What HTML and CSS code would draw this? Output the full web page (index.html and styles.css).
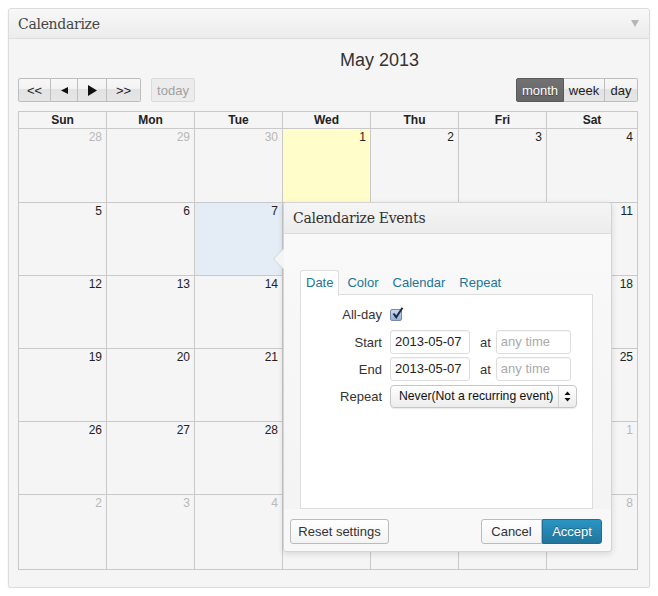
FILE: index.html
```html
<!DOCTYPE html>
<html>
<head>
<meta charset="utf-8">
<link rel="stylesheet" href="styles.css">
</head>
<body>
<div class="panel">
  <div class="panel-head">
    <span class="panel-title">Calendarize</span>
    <span class="collapse"></span>
  </div>
  <div class="panel-body">
    <div class="cal-title">May 2013</div>
    <div class="toolbar">
      <div class="btn-group">
        <button class="btn w33">&lt;&lt;</button>
        <button class="btn w27"><svg width="7" height="7" viewBox="0 0 7 7"><path d="M0 3.5 L7 0 L7 7 Z" fill="#111"/></svg></button>
        <button class="btn w29"><svg width="9" height="11" viewBox="0 0 9 11"><path d="M0 0 L9 5.5 L0 11 Z" fill="#111"/></svg></button>
        <button class="btn w34">&gt;&gt;</button>
      </div>
      <button class="btn today">today</button>
      <div class="spacer"></div>
      <div class="btn-group">
        <button class="btn active w48">month</button>
        <button class="btn w41">week</button>
        <button class="btn w33">day</button>
      </div>
    </div>
    <div class="grid">
      <div class="dh">Sun</div><div class="dh">Mon</div><div class="dh">Tue</div><div class="dh">Wed</div><div class="dh">Thu</div><div class="dh">Fri</div><div class="dh">Sat</div>

      <div class="d r1 other">28</div><div class="d r1 other">29</div><div class="d r1 other">30</div><div class="d r1 today-cell">1</div><div class="d r1">2</div><div class="d r1">3</div><div class="d r1">4</div>

      <div class="d">5</div><div class="d">6</div><div class="d sel">7</div><div class="d">8</div><div class="d">9</div><div class="d">10</div><div class="d">11</div>

      <div class="d">12</div><div class="d">13</div><div class="d">14</div><div class="d">15</div><div class="d">16</div><div class="d">17</div><div class="d">18</div>

      <div class="d">19</div><div class="d">20</div><div class="d">21</div><div class="d">22</div><div class="d">23</div><div class="d">24</div><div class="d">25</div>

      <div class="d">26</div><div class="d">27</div><div class="d">28</div><div class="d">29</div><div class="d">30</div><div class="d">31</div><div class="d other">1</div>

      <div class="d r6 other">2</div><div class="d r6 other">3</div><div class="d r6 other">4</div><div class="d r6 other">5</div><div class="d r6 other">6</div><div class="d r6 other">7</div><div class="d r6 other">8</div>
    </div>
  </div>

  <div class="popup">
    <span class="arrow"></span>
    <div class="popup-head">Calendarize Events</div>
    <div class="popup-body">
      <div class="tabs">
        <span class="tab active">Date</span>
        <span class="tab">Color</span>
        <span class="tab">Calendar</span>
        <span class="tab">Repeat</span>
      </div>
      <div class="tab-box">
        <div class="frow allday">
          <span class="lbl">All-day</span>
          <span class="check"><svg width="13" height="13" viewBox="0 0 13 13"><path d="M2.5 6.5 L5.2 10.2 L11.5 0.8" fill="none" stroke="#1c2a4a" stroke-width="2"/></svg></span>
        </div>
        <div class="frow first">
          <span class="lbl">Start</span>
          <span class="inp date">2013-05-07</span>
          <span class="at">at</span>
          <span class="inp time">any time</span>
        </div>
        <div class="frow">
          <span class="lbl">End</span>
          <span class="inp date">2013-05-07</span>
          <span class="at">at</span>
          <span class="inp time">any time</span>
        </div>
        <div class="frow">
          <span class="lbl">Repeat</span>
          <span class="select"><span class="sel-text">Never(Not a recurring event)</span><span class="sel-arrows"><svg width="7" height="11" viewBox="0 0 7 11"><path d="M0.5 4 L3.5 0.5 L6.5 4 Z M0.5 7 L3.5 10.5 L6.5 7 Z" fill="#111"/></svg></span></span>
        </div>
      </div>
    </div>
    <div class="popup-foot">
      <button class="pbtn reset">Reset settings</button>
      <div class="spacer"></div>
      <button class="pbtn cancel">Cancel</button>
      <button class="pbtn accept">Accept</button>
    </div>
  </div>
</div>
</body>
</html>
```
FILE: styles.css
```css
* { box-sizing: border-box; }
body {
  margin: 0;
  background: #ffffff;
  font-family: "Liberation Sans", Arial, sans-serif;
  color: #333;
}
.panel {
  position: relative;
  margin: 8px 0 0 8px;
  width: 642px;
  height: 580px;
  border: 1px solid #dcdcdc;
  border-radius: 3px;
  background: #f5f5f5;
  box-shadow: 0 1px 2px rgba(0,0,0,0.08);
}
.panel-head {
  height: 30px;
  display: flex;
  align-items: center;
  padding: 0 9px 0 9px;
  background: linear-gradient(#f8f8f8, #ececec);
  border-bottom: 1px solid #dfdfdf;
  border-radius: 3px 3px 0 0;
}
.panel-title {
  font-family: "DejaVu Serif", Georgia, serif;
  font-size: 14px;
  color: #464646;
  flex: 1;
  letter-spacing: -0.3px;
}
.collapse {
  width: 0; height: 0;
  border-left: 4px solid transparent;
  border-right: 4px solid transparent;
  border-top: 7px solid #b5b5b5;
  margin-right: 1px;
}
.panel-body {
  padding: 0 11px 0 9px;
}
.cal-title {
  margin-top: 10px;
  padding-left: 322px;
  font-size: 18px;
  line-height: 22px;
  color: #333;
}
.toolbar {
  margin-top: 7px;
  display: flex;
  align-items: center;
  height: 24px;
}
.spacer { flex: 1; }
.btn-group { display: flex; }
.btn {
  height: 24px;
  margin: 0;
  padding: 0;
  font-family: "Liberation Sans", Arial, sans-serif;
  font-size: 13px;
  color: #222;
  border: 1px solid #bdbdbd;
  border-left-width: 0;
  background: linear-gradient(#f7f7f7 0%, #f2f2f2 45%, #e2e2e2 46%, #e6e6e6 100%);
  display: flex;
  align-items: center;
  justify-content: center;
}
.btn-group .btn:first-child { border-left-width: 1px; border-radius: 2px 0 0 2px; }
.btn-group .btn:last-child { border-radius: 0 2px 2px 0; }
.w33 { width: 33px; }
.w27 { width: 27px; }
.w29 { width: 29px; }
.w34 { width: 34px; }
.w48 { width: 48px; }
.w41 { width: 41px; }
.btn.today {
  margin-left: 10px;
  width: 44px;
  border: 1px solid #dadada;
  border-radius: 2px;
  background: #ececec;
  color: #a0a0a0;
}
.btn.active {
  background: linear-gradient(#727272, #666);
  border-color: #5a5a5a;
  color: #fff;
  text-shadow: 0 1px 1px rgba(0,0,0,0.4);
}
.grid {
  margin-top: 9px;
  width: 620px;
  display: grid;
  grid-template-columns: repeat(6, 88px) 1fr;
  grid-template-rows: 17px 74px 73px 73px 73px 73px 75px;
  border-left: 1px solid #c9c9c9;
  border-top: 1px solid #c9c9c9;
}
.dh, .d {
  border-right: 1px solid #c9c9c9;
  border-bottom: 1px solid #c9c9c9;
  font-size: 12px;
}
.dh {
  font-weight: bold;
  text-align: center;
  line-height: 16px;
  color: #222;
}
.d {
  text-align: right;
  padding: 1px 4px 0 0;
  line-height: 14px;
  color: #222;
}
.d.other { color: #b8b8b8; }
.d.today-cell { background: #fffdc9; }
.d.sel { background: #e4ecf6; }

.popup {
  position: absolute;
  left: 274px;
  top: 193px;
  width: 329px;
  height: 350px;
  border: 1px solid #d4d4d4;
  border-radius: 3px;
  background: #f8f8f8;
  box-shadow: 0 2px 6px rgba(0,0,0,0.12);
}
.arrow {
  position: absolute;
  left: -11px;
  top: 45px;
  width: 0; height: 0;
  border-top: 11px solid transparent;
  border-bottom: 11px solid transparent;
  border-right: 11px solid #d4d4d4;
}
.arrow::after {
  content: "";
  position: absolute;
  left: 1px;
  top: -10px;
  border-top: 10px solid transparent;
  border-bottom: 10px solid transparent;
  border-right: 10px solid #f5f5f5;
}
.popup-head {
  height: 31px;
  padding-left: 9px;
  display: flex;
  align-items: center;
  font-family: "DejaVu Serif", Georgia, serif;
  font-size: 14px;
  letter-spacing: -0.3px;
  color: #333;
  background: linear-gradient(#f5f5f5, #ececec);
  border-bottom: 1px solid #dcdcdc;
  border-radius: 3px 3px 0 0;
}
.popup-body {
  padding: 36px 18px 0 16px;
  background: linear-gradient(#f9f9f9, #f4f4f4);
}
.tabs {
  display: flex;
  height: 25px;
  position: relative;
  z-index: 1;
}
.tab {
  padding: 0 6px;
  border: 1px solid transparent;
  border-bottom: 0;
  font-size: 13px;
  line-height: 24px;
  color: #21759b;
}
.tab.active {
  padding: 0 5px;
  margin-right: 1px;
  background: #fff;
  border-color: #dddddd;
  border-radius: 3px 3px 0 0;
  height: 26px;
}
.tab-box {
  height: 215px;
  margin-top: -1px;
  background: #fff;
  border: 1px solid #dddddd;
}
.frow {
  display: flex;
  align-items: center;
  height: 24px;
  margin-top: 3px;
  font-size: 13px;
  color: #333;
}
.frow.allday { height: 16px; margin-top: 11px; }
.frow.first { margin-top: 8px; }
.lbl {
  width: 81px;
  text-align: right;
  margin-right: 8px;
}
.check {
  width: 12px;
  height: 12px;
  margin-top: 2px;
  border: 1px solid #7a8aa8;
  border-radius: 2px;
  background: linear-gradient(#c9d8ef, #98b1d8);
  position: relative;
}
.check svg { position: absolute; left: 0; top: -3px; }
.inp {
  height: 24px;
  border: 1px solid #dddddd;
  border-radius: 3px;
  background: #fff;
  line-height: 22px;
  padding: 0 4px;
  box-shadow: inset 0 1px 1px rgba(0,0,0,0.04);
}
.inp.date { width: 80px; color: #222; }
.inp.time { width: 75px; color: #aaa; }
.at { margin: 0 5px 0 10px; }
.select {
  width: 187px;
  height: 23px;
  display: flex;
  align-items: center;
  border: 1px solid #c6c6c6;
  border-radius: 4px;
  background: linear-gradient(#ffffff, #ececec);
  box-shadow: 0 1px 1px rgba(0,0,0,0.08);
  color: #111;
}
.sel-text { flex: 1; padding-left: 8px; white-space: nowrap; font-size: 12.2px; }
.sel-arrows {
  width: 18px;
  height: 21px;
  border-left: 1px solid #d2d2d2;
  display: flex;
  align-items: center;
  justify-content: center;
}
.popup-foot {
  display: flex;
  padding: 10px 9px 0 6px;
}
.pbtn {
  height: 25px;
  margin: 0;
  font-family: "Liberation Sans", Arial, sans-serif;
  font-size: 13px;
  color: #333;
  border: 1px solid #bbbbbb;
  border-radius: 3px;
  background: linear-gradient(#ffffff, #f3f3f3);
  padding: 0;
}
.pbtn.reset { width: 99px; }
.pbtn.cancel { width: 61px; border-radius: 3px 0 0 3px; }
.pbtn.accept {
  width: 60px;
  color: #fff;
  border-color: #1f6d95;
  border-radius: 0 3px 3px 0;
  background: linear-gradient(#2a95c5, #21759b);
  text-shadow: 0 -1px 0 rgba(0,0,0,0.3);
}
```
